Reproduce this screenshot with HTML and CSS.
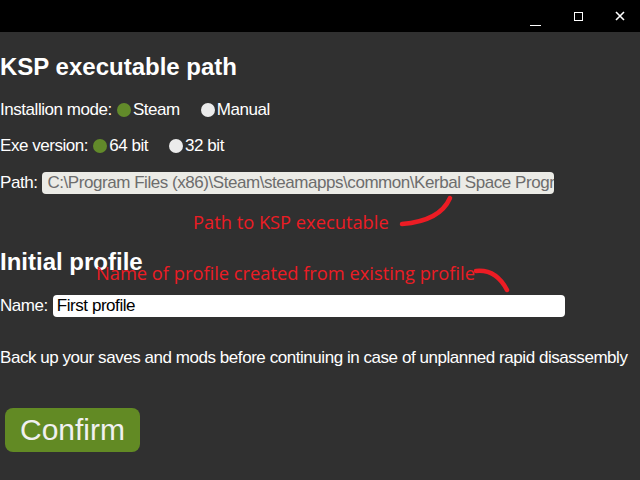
FILE: index.html
```html
<!DOCTYPE html>
<html>
<head>
<meta charset="utf-8">
<link rel="stylesheet" href="styles.css">
</head>
<body>
<div class="titlebar">
  <span class="tb-btn tb-min"></span>
  <span class="tb-btn tb-max"></span>
  <span class="tb-btn tb-close">
    <svg width="10" height="10" viewBox="0 0 10 10"><path d="M1 1L9 9M9 1L1 9" stroke="#fff" stroke-width="1.6"/></svg>
  </span>
</div>
<main class="content">
  <h2 class="heading h-first">KSP executable path</h2>
  <div class="row r-mode">
    <span class="label">Installion mode:</span>
    <span class="radio"><span class="dot on"></span>Steam</span>
    <span class="radio"><span class="dot"></span>Manual</span>
  </div>
  <div class="row r-exe">
    <span class="label">Exe version:</span>
    <span class="radio"><span class="dot on"></span>64 bit</span>
    <span class="radio"><span class="dot"></span>32 bit</span>
  </div>
  <div class="row r-path">
    <span class="label">Path:</span>
    <div class="input path-input">C:\Program Files (x86)\Steam\steamapps\common\Kerbal Space Program\KSP_x64.exe</div>
  </div>
  <div class="annot-row a1">
    <span class="annot">Path to KSP executable</span>
  </div>
  <h2 class="heading h-second">Initial profile</h2>
  <div class="row r-name">
    <span class="label">Name:</span>
    <div class="input name-input">First profile</div>
  </div>
  <p class="warning">Back up your saves and mods before continuing in case of unplanned rapid disassembly</p>
  <button class="confirm">Confirm</button>
  <span class="annot a2">Name of profile created from existing profile</span>
  <svg class="strokes" width="640" height="480" viewBox="0 0 640 480">
    <path d="M402 224 Q440 221 450 198" stroke="#ec1c24" stroke-width="4.5" fill="none" stroke-linecap="round"/>
    <path d="M476 271 Q496 269 507 290" stroke="#ec1c24" stroke-width="4.5" fill="none" stroke-linecap="round"/>
  </svg>
</main>
</body>
</html>
```
FILE: styles.css
```css
html, body {
  margin: 0;
  padding: 0;
  background: #303030;
  width: 640px;
  height: 480px;
  overflow: hidden;
  font-family: "Liberation Sans", Arial, sans-serif;
  color: #ffffff;
}
.titlebar {
  height: 32px;
  background: #000;
  display: flex;
  justify-content: flex-end;
  align-items: center;
}
.tb-btn {
  width: 43px;
  height: 32px;
  display: flex;
  align-items: center;
  justify-content: center;
}
.tb-min::before {
  content: "";
  display: block;
  width: 11px;
  height: 1px;
  background: #fff;
  margin-top: 19px;
}
.tb-max::before {
  content: "";
  display: block;
  width: 9px;
  height: 9px;
  border: 1px solid #fff;
  box-sizing: border-box;
}
.tb-close { width: 40px; }
.content {
  position: relative;
  height: 448px;
}
.heading {
  margin: 0;
  font-size: 24px;
  font-weight: bold;
  line-height: 28px;
}
.h-first { padding-top: 21px; }
.row {
  display: flex;
  align-items: center;
  font-size: 17px;
  height: 22px;
  letter-spacing: -0.45px;
}
.r-mode { margin-top: 18px; }
.r-exe { margin-top: 14px; }
.r-path { margin-top: 15px; }
.label { margin-right: 5px; }
.radio {
  display: inline-flex;
  align-items: center;
  margin-right: 21px;
}
.dot {
  width: 14px;
  height: 14px;
  border-radius: 50%;
  background: #ebebeb;
  margin-right: 2px;
}
.dot.on { background: #628a2a; }
.input {
  height: 22px;
  line-height: 22px;
  border-radius: 4px;
  padding: 0 5px;
  box-sizing: border-box;
  white-space: nowrap;
  overflow: hidden;
  font-size: 17px;
}
.path-input {
  width: 512px;
  background: #ebebe6;
  color: #6d6d6d;
}
.name-input {
  width: 512px;
  background: #ffffff;
  color: #000;
  padding-left: 4px;
}
.annot-row {
  padding-left: 193px;
  padding-top: 17px;
  line-height: 22px;
  height: 22px;
}
.annot {
  color: #ec1c24;
  font-family: "Open Sans", sans-serif;
  font-size: 18.3px;
  letter-spacing: 0;
  line-height: 22px;
}
.a2 {
  position: absolute;
  left: 96px;
  top: 230px;
}
.h-second { margin-top: 15px; }
.r-name { margin-top: 19px; }
.warning {
  margin: 31px 0 0 0;
  font-size: 17px;
  letter-spacing: -0.45px;
  line-height: 20px;
}
.confirm {
  margin: 40px 0 0 5px;
  width: 135px;
  height: 44px;
  border: none;
  border-radius: 8px;
  background: #628a24;
  color: #f0f0f0;
  font-family: "Liberation Sans", Arial, sans-serif;
  font-size: 30px;
  padding: 0;
  display: block;
}
.strokes {
  position: absolute;
  left: 0;
  top: -32px;
  pointer-events: none;
}
```
